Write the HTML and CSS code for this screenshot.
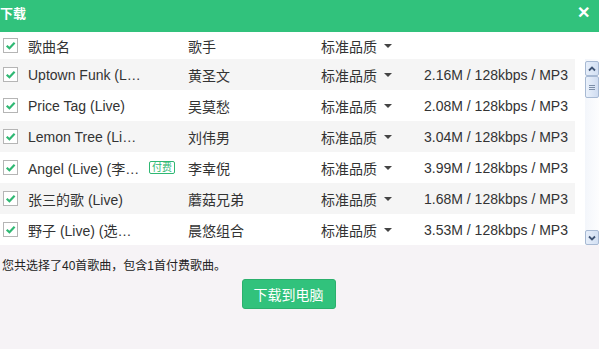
FILE: index.html
```html
<!DOCTYPE html>
<html lang="zh-CN">
<head>
    <meta charset="UTF-8">
    <title>下载</title>
    <link rel="stylesheet" href="styles.css">
</head>
<body>
    <div class="dialog">
        <!-- Title bar -->
        <header class="titlebar">
            <span class="title">下载</span>
            <span class="close">&#x2715;</span>
        </header>

        <!-- Song list -->
        <section class="list">
            <div class="row head">
                <span class="check"><svg viewBox="0 0 12 12"><path d="M2.5 6.2 L5 8.6 L9.8 3.4"/></svg></span>
                <span class="name">歌曲名</span>
                <span class="singer">歌手</span>
                <span class="quality">标准品质 <i class="caret"></i></span>
                <span class="size"></span>
            </div>
            <div class="scroll">
                <div class="rows">
                    <div class="row odd">
                        <span class="check"><svg viewBox="0 0 12 12"><path d="M2.5 6.2 L5 8.6 L9.8 3.4"/></svg></span>
                        <span class="name"><span class="text">Uptown Funk (Live)</span></span>
                        <span class="singer">黄圣文</span>
                        <span class="quality">标准品质 <i class="caret"></i></span>
                        <span class="size">2.16M / 128kbps / MP3</span>
                    </div>
                    <div class="row">
                        <span class="check"><svg viewBox="0 0 12 12"><path d="M2.5 6.2 L5 8.6 L9.8 3.4"/></svg></span>
                        <span class="name"><span class="text">Price Tag (Live)</span></span>
                        <span class="singer">吴莫愁</span>
                        <span class="quality">标准品质 <i class="caret"></i></span>
                        <span class="size">2.08M / 128kbps / MP3</span>
                    </div>
                    <div class="row odd">
                        <span class="check"><svg viewBox="0 0 12 12"><path d="M2.5 6.2 L5 8.6 L9.8 3.4"/></svg></span>
                        <span class="name"><span class="text">Lemon Tree (Live)</span></span>
                        <span class="singer">刘伟男</span>
                        <span class="quality">标准品质 <i class="caret"></i></span>
                        <span class="size">3.04M / 128kbps / MP3</span>
                    </div>
                    <div class="row">
                        <span class="check"><svg viewBox="0 0 12 12"><path d="M2.5 6.2 L5 8.6 L9.8 3.4"/></svg></span>
                        <span class="name"><span class="text">Angel (Live) (李幸倪)</span><em class="paid">付费</em></span>
                        <span class="singer">李幸倪</span>
                        <span class="quality">标准品质 <i class="caret"></i></span>
                        <span class="size">3.99M / 128kbps / MP3</span>
                    </div>
                    <div class="row odd">
                        <span class="check"><svg viewBox="0 0 12 12"><path d="M2.5 6.2 L5 8.6 L9.8 3.4"/></svg></span>
                        <span class="name"><span class="text">张三的歌 (Live)</span></span>
                        <span class="singer">蘑菇兄弟</span>
                        <span class="quality">标准品质 <i class="caret"></i></span>
                        <span class="size">1.68M / 128kbps / MP3</span>
                    </div>
                    <div class="row">
                        <span class="check"><svg viewBox="0 0 12 12"><path d="M2.5 6.2 L5 8.6 L9.8 3.4"/></svg></span>
                        <span class="name"><span class="text">野子 (Live) (选手版)</span></span>
                        <span class="singer">晨悠组合</span>
                        <span class="quality">标准品质 <i class="caret"></i></span>
                        <span class="size">3.53M / 128kbps / MP3</span>
                    </div>
                </div>

                <!-- Scrollbar -->
                <div class="scrollbar">
                    <span class="sb-btn"><svg viewBox="0 0 10 10"><path d="M2 6.5 L5 3.5 L8 6.5"/></svg></span>
                    <span class="sb-thumb"><i></i><i></i><i></i></span>
                    <span class="sb-track"></span>
                    <span class="sb-btn"><svg viewBox="0 0 10 10"><path d="M2 3.5 L5 6.5 L8 3.5"/></svg></span>
                </div>
            </div>
        </section>

        <!-- Footer -->
        <footer class="footer">
            <p class="summary">您共选择了40首歌曲，包含1首付费歌曲。</p>
            <div class="actions">
                <button class="btn">下载到电脑</button>
            </div>
        </footer>
    </div>
</body>
</html>
```

FILE: styles.css
```css
/* Global */
body {
    margin: 0;
    font-family: "Liberation Sans", "Noto Sans CJK SC", sans-serif;
    color: #333;
    background-color: #f6f3f6;
}
.dialog {
    width: 599px;
    height: 349px;
    display: flex;
    flex-direction: column;
    overflow: hidden;
}

/* Title bar */
.titlebar {
    height: 32px;
    background-color: #31c27c;
    color: #fff;
    display: flex;
    align-items: center;
    justify-content: space-between;
    padding: 0 9px 8px 0;
    box-sizing: border-box;
}
.title {
    font-size: 13px;
    font-weight: bold;
}
.close {
    font-size: 16px;
    font-weight: bold;
}

/* List */
.list {
    background-color: #fff;
}
.row {
    height: 31px;
    display: flex;
    align-items: center;
    font-size: 14px;
    width: 575px;
}
.row.head {
    height: 27px;
}
.row.odd {
    background-color: #f5f5f5;
}
.check {
    width: 13px;
    height: 13px;
    border: 1px solid #b5b5b5;
    background-color: #fff;
    margin: 0 10px 0 3px;
    display: flex;
    flex-shrink: 0;
}
.check svg {
    width: 13px;
    height: 13px;
    fill: none;
    stroke: #2fb873;
    stroke-width: 2;
}
.name {
    width: 160px;
    display: flex;
    align-items: center;
    flex-shrink: 0;
}
.name .text {
    max-width: 113px;
    white-space: nowrap;
    overflow: hidden;
    text-overflow: ellipsis;
}
.paid {
    font-style: normal;
    font-size: 10px;
    color: #2fb873;
    border: 1px solid #2fb873;
    border-radius: 2px;
    padding: 0 2px;
    line-height: 11px;
    margin-left: 8px;
}
.singer {
    width: 133px;
    flex-shrink: 0;
}
.quality {
    width: 90px;
    flex-shrink: 0;
    display: flex;
    align-items: center;
}
.caret {
    display: inline-block;
    border-left: 4px solid transparent;
    border-right: 4px solid transparent;
    border-top: 4px solid #444;
    margin-left: 7px;
}
.size {
    flex: 1;
    text-align: right;
    padding-right: 7px;
}

/* Scroll area */
.scroll {
    display: flex;
    height: 186px;
}
.rows {
    width: 585px;
}
.scrollbar {
    width: 14px;
    display: flex;
    flex-direction: column;
    padding-top: 2px;
    background: linear-gradient(to right, #f3f6fb, #fdfdfe);
}
.sb-btn {
    height: 13px;
    border: 1px solid #a7b9d3;
    border-radius: 2px;
    background: linear-gradient(to right, #e6eefa, #d3e0f3);
    display: flex;
    align-items: center;
    justify-content: center;
}
.sb-btn svg {
    width: 10px;
    height: 10px;
    fill: none;
    stroke: #3f5475;
    stroke-width: 1.8;
}
.sb-thumb {
    height: 20px;
    border: 1px solid #a7b9d3;
    border-radius: 2px;
    background: linear-gradient(to right, #eaf1fb, #cfdcf1);
    display: flex;
    flex-direction: column;
    justify-content: center;
    align-items: center;
    gap: 1px;
}
.sb-thumb i {
    width: 6px;
    height: 1px;
    background-color: #7c8ea8;
}
.sb-track {
    flex: 1;
}

/* Footer */
.footer {
    flex: 1;
}
.summary {
    font-size: 12px;
    margin: 11px 0 0 2px;
    color: #222;
}
.actions {
    display: flex;
    justify-content: center;
    padding: 6px 22px 0 0;
}
.btn {
    width: 94px;
    height: 30px;
    border: 1px solid #2bb06d;
    border-radius: 3px;
    background-color: #31c27c;
    color: #fff;
    font-family: inherit;
    font-size: 14px;
}
```
